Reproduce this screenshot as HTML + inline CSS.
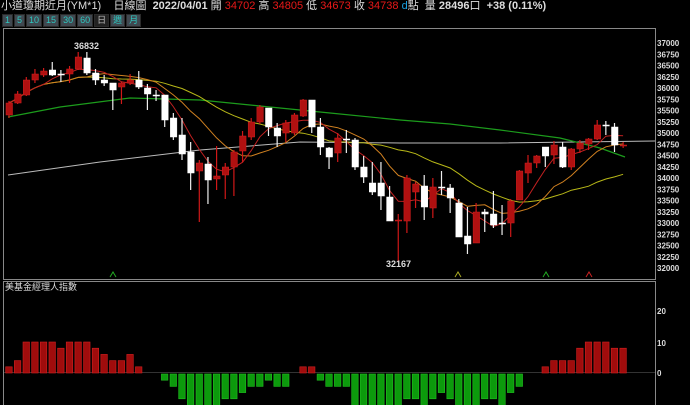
<!DOCTYPE html><html><head><meta charset="utf-8"><style>
body{margin:0;background:#000;width:690px;height:405px;overflow:hidden;font-family:"Liberation Sans","Noto Sans CJK TC",sans-serif}
#h{position:absolute;left:1px;top:0;font-size:11px;color:#ddd;white-space:pre;line-height:13px}
.r{color:#e81818}.d{color:#1aa0e0}
#b{position:absolute;left:2px;top:14px;display:flex;gap:1px}
#b span{background:#404850;color:#2ec8c0;font-size:9px;line-height:11px;padding:0 2px;border:1px solid #2a2a2a}
svg{position:absolute;left:0;top:0}
</style></head><body>
<div id="h">小道瓊期近月(YM*1)    日線圖  <b>2022/04/01</b> 開 <span class="r">34702</span> 高 <span class="r">34805</span> 低 <span class="r">34673</span> 收 <span class="r">34738</span> <span class="d">d</span>點  量 <b>28496</b>口  <b>+38 (0.11%)</b></div>
<div id="b"><span>1</span><span>5</span><span>10</span><span>15</span><span>30</span><span>60</span><span style="color:#bbb;background:#222">日</span><span>週</span><span>月</span></div>
<svg id="s" width="690" height="405"></svg>
<script>
var C=[['r',103,115,101,118],['r',94,103,91,104],['r',80,95,77,96],['r',74,80,69,83],['r',71,75,68,77],['w',70,75,62,76],['w',74,74,70,82],['r',69,74,66,83],['r',57,69,52,70],['w',58,73,52,75],['w',73,80,69,85],['w',80,83,75,86],['w',83,90,83,110],['r',83,87,82,104],['r',80,83,74,85],['w',80,87,71,89],['w',88,94,84,110],['w',95,95,90,101],['w',95,120,95,127],['w',118,137,113,140],['w',135,154,118,160],['w',152,173,142,190],['r',163,171,160,222],['w',164,180,157,204],['r',176,179,146,190],['r',167,175,163,199],['r',152,167,150,196],['r',136,151,131,162],['r',122,137,118,140],['r',107,122,105,124],['w',108,127,108,136],['w',128,136,123,147],['r',123,133,120,142],['r',115,133,113,135],['r',100,116,99,117],['w',100,127,100,133],['w',127,147,118,155],['w',148,157,147,169],['r',138,153,133,162],['w',139,139,130,153],['w',140,167,138,170],['w',167,177,156,183],['w',183,192,162,195],['w',183,196,162,210],['w',197,221,186,221],['r',220,221,214,262],['r',178,221,175,233],['r',184,192,182,208],['w',186,207,175,220],['r',187,208,178,218],['w',187,187,171,195],['w',188,198,184,213],['w',203,237,199,237],['w',236,244,207,254],['r',212,243,203,243],['w',212,214,209,232],['w',214,225,191,228],['w',223,223,205,235],['r',201,223,199,237],['r',171,200,170,200],['r',163,173,155,183],['r',156,163,155,168],['w',147,156,147,167],['r',145,155,141,164],['w',147,167,142,168],['r',149,167,148,170],['r',143,149,140,153],['r',139,144,138,150],['r',125,139,120,140],['w',125,125,121,135],['w',127,145,123,152],['r',145,146,142,148]];
var V=[2,4,10,10,10,10,8,10,10,10,8,6,4,4,6,2,0,0,-2,-4,-8,-12,-12,-12,-12,-8,-8,-6,-4,-4,-2,-4,-4,0,2,2,-2,-4,-4,-4,-12,-12,-12,-12,-12,-12,-8,-8,-12,-8,-6,-8,-12,-12,-12,-8,-8,-12,-6,-4,0,0,2,4,4,4,8,10,10,10,8,8];
var s='',X=i=>9+8.65*i;
s+='<rect x="3.5" y="28.5" width="652" height="251" fill="none" stroke="#888"/>';
s+='<rect x="3.5" y="281.5" width="652" height="130" fill="none" stroke="#888"/>';
for(var k=0;k<=20;k++){var p=37000-250*k,y=43+11.25*k;s+='<text x="657" y="'+(y+3)+'" fill="#ddd" font-size="8" font-weight="bold">'+p+'</text>';}
[[20,311],[10,343],[0,373]].forEach(a=>s+='<text x="657" y="'+(a[1]+3)+'" fill="#ddd" font-size="8" font-weight="bold">'+a[0]+'</text>');
s+='<polyline fill="none" stroke="#bbb" stroke-width="1" points="8,175 100,162 200,150 300,142 400,143 500,143 655,141"/>';
s+='<polyline fill="none" stroke="#1c9c1c" stroke-width="1.2" points="8,117 60,107 130,98 200,100 260,106 330,113 400,120 450,124 500,130 560,138 600,148 625,157"/>';
var cl=C.map(c=>c[0]=='r'?c[1]:c[2]);
function ma(n,col){var p=[];for(var i=0;i<cl.length;i++){var a=Math.max(0,i-n+1),t=0;for(var j=a;j<=i;j++)t+=cl[j];p.push(X(i).toFixed(1)+','+(t/(i-a+1)).toFixed(1));}return '<polyline fill="none" stroke="'+col+'" stroke-width="1" points="'+p.join(' ')+'"/>';}
s+=ma(20,'#b8b818')+ma(10,'#d08020')+ma(5,'#c02020');
C.forEach((c,i)=>{var x=X(i),col=c[0]=='r'?'#b01010':'#fff',bc=c[0]=='r'?'#d02020':'#fff';
s+='<line x1="'+x+'" x2="'+x+'" y1="'+c[3]+'" y2="'+c[4]+'" stroke="'+(c[0]=='r'?'#d01818':'#eee')+'" stroke-width="1.2"/>';
var h=Math.max(1,c[2]-c[1]);s+='<rect x="'+(x-3)+'" y="'+c[1]+'" width="6.5" height="'+h+'" fill="'+col+'" stroke="'+bc+'" stroke-width="0.5"/>';});
s+='<text x="74" y="49" fill="#ddd" font-size="9" font-weight="bold">36832</text><text x="386" y="267" fill="#ddd" font-size="9" font-weight="bold">32167</text>';
[[113,'#2a2'],[458,'#aa2'],[546,'#2a2'],[589,'#c22']].forEach(t=>s+='<polyline points="'+(t[0]-3)+',277 '+t[0]+',272 '+(t[0]+3)+',277" fill="none" stroke="'+t[1]+'"/>');
s+='<text x="5" y="290" fill="#ddd" font-size="9">美基金經理人指數</text>';
s+='<line x1="4" x2="655" y1="372.5" y2="372.5" stroke="#333"/>';
V.forEach((v,i)=>{if(!v)return;var x=5.7+8.65*i,h=Math.abs(v)*3.1;var y=v>0?373-h:374;
s+='<rect x="'+x+'" y="'+y+'" width="6.5" height="'+h+'" fill="'+(v>0?'#a00c0c':'#0c9a0c')+'" stroke="'+(v>0?'#d02020':'#20c020')+'" stroke-width="0.6"/>';});
document.getElementById('s').innerHTML=s;
</script></body></html>
